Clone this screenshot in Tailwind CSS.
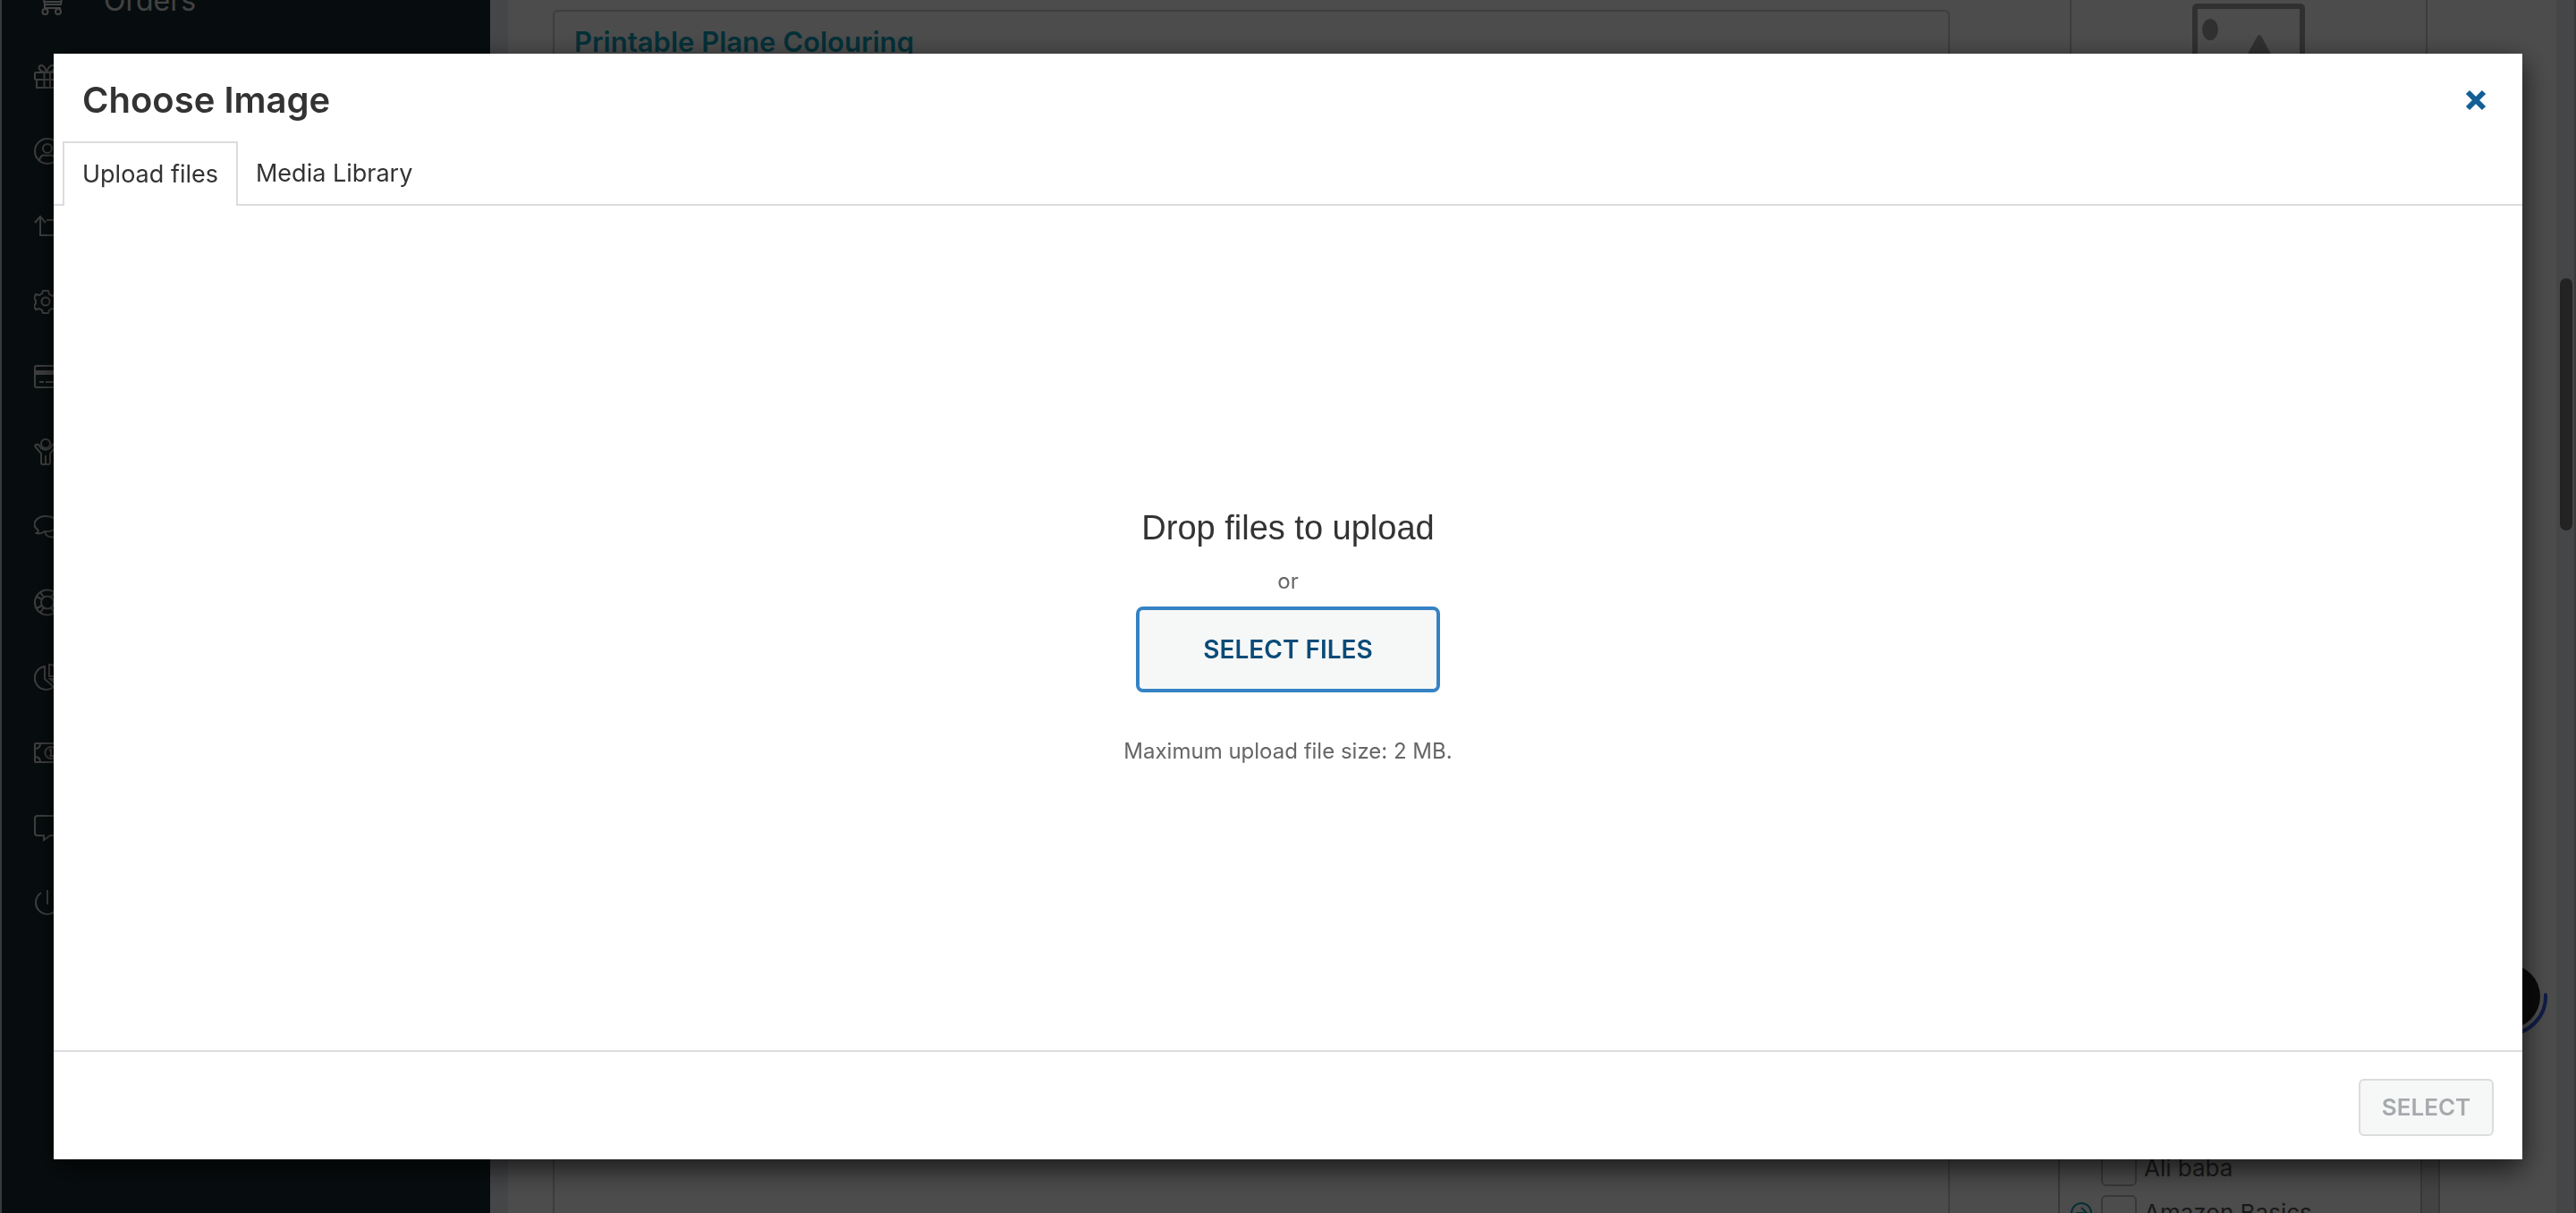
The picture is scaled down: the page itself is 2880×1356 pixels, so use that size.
<!DOCTYPE html>
<html lang="en">
<head>
<meta charset="utf-8">
<title>Choose Image</title>
<script src="https://cdn.jsdelivr.net/npm/@tailwindcss/browser@4"></script>
</head>
<body class="h-screen overflow-hidden bg-white font-['Inter',sans-serif] text-[#2c3338]">

<!-- Store manager page behind the dialog -->
<div class="flex h-screen overflow-hidden" aria-hidden="true">
  <nav class="w-[548px] shrink-0 border-l-2 border-[#c4c4c4] bg-[#1a2c32] pl-9 text-[#dcdcdc]">
    <ul class="-mt-[41px] [&>li]:flex [&>li]:h-[84px] [&>li]:items-center [&_svg]:h-10 [&_svg]:w-10 [&_svg]:fill-none [&_svg]:stroke-current [&_svg]:stroke-2">
      <li class="gap-[38px]"><svg viewBox="0 0 40 40"><path d="M4 7h5l3 17h18l2-14H10M12 21h18M12 24v4h18"/><circle cx="12.500" cy="32" r="3"/><circle cx="27" cy="32" r="3"/></svg><span class="text-[32px] leading-10">Orders</span></li>
      <li><svg viewBox="0 0 40 40"><rect x="1" y="16" width="28" height="8" rx="1"/><path d="M3 24v9h24v-9M11.500 16v17M18 16v17M14 16c-8 0-11-7-6-8 4 0 6 8 6 8s2-8 7-8c5 1 2 8-7 8"/></svg></li>
      <li><svg viewBox="0 0 40 40"><circle cx="15" cy="20" r="14"/><circle cx="15" cy="17" r="5"/><path d="M6 31c1-7 4-7 9-6 5-1 8-1 9 6"/></svg></li>
      <li><svg viewBox="0 0 40 40"><path d="M1 16l6-7 6 7M7 9v21h17M14 13h17v20M25 27l6 6 6-6"/></svg></li>
      <li><svg viewBox="0 0 40 40"><circle cx="13" cy="20" r="4.500"/><path d="M10 8h6l1 4 4 2 4-2 2 5-3 3 0 2 3 3-3 4-4-1-3 2-1 3h-6l-1-3-3-2-4 1-2-4 2-3v-3l-2-3 2-4 4 1 3-2z"/></svg></li>
      <li><svg viewBox="0 0 40 40"><rect x="1" y="8" width="36" height="24" rx="2"/><path d="M1 15.500h36" stroke-width="5"/><path d="M6 26h5M13 26h12"/></svg></li>
      <li><svg viewBox="0 0 40 40"><circle cx="13" cy="11" r="5"/><path d="M8 16l-3-4c-2-1-5 1-3 3l6 7v10c0 3 5 3 5 0v-8 8c0 3 5 3 5 0V22l6-7c2-2-1-4-3-3l-3 4c-3 2-7 2-10 0z"/></svg></li>
      <li><svg viewBox="0 0 40 40"><path d="M3 27c2-1 2-3 1-4C-4 17 3 8 13 8c8 0 13 4 13 9s-6 9-14 8c-3 2-6 3-9 2zM12 26c2 6 9 6 14 5 3 2 6 1 8 1-2-2-1-4 0-5 4-5 0-10-7-12"/></svg></li>
      <li><svg viewBox="0 0 40 40"><circle cx="15" cy="20.500" r="14"/><circle cx="15" cy="20.500" r="7"/><path d="M3 14l6 3M7 9l4 6M27 14l-6 3M23 9l-4 6M3 27l6-3M7 32l4-6M27 27l-6-3M23 32l-4-6"/></svg></li>
      <li><svg viewBox="0 0 40 40"><path d="M12 8a13 13 0 1 0 10 23l-10-9zM17 6v13h13c0-7-5-13-13-13zM18 22l8 7 4-7z"/></svg></li>
      <li><svg viewBox="0 0 40 40"><rect x="1" y="10" width="36" height="21" rx="1"/><circle cx="19" cy="20.500" r="6.500"/><path d="M17 18l2-1v7M17 24h5M1 16c4 0 6-2 6-6M1 25c4 0 6 2 6 6M37 16c-4 0-6-2-6-6M37 25c-4 0-6 2-6 6"/></svg></li>
      <li><svg viewBox="0 0 40 40"><path d="M4 7h29q3 0 3 3v16q0 3-3 3H18l-7 5v-5H4q-3 0-3-3V10q0-3 3-3z"/></svg></li>
      <li><svg viewBox="0 0 40 40"><path d="M15 6v16M8 9a13 13 0 1 0 14 0"/></svg></li>
    </ul>
  </nav>
  <main class="flex min-w-0 flex-1 border-x-20 border-[#e6e9ef] bg-white pr-[130px] pl-[50px]">
    <section class="mt-[11px] -mb-2 flex-1 rounded-md border-2 border-[#c8ccce] px-[22px] pt-[14px]">
      <h2 class="text-[31px] leading-10 font-semibold text-[#0fa0ba]">Printable Plane Colouring</h2>
    </section>
    <aside class="ml-[121px] flex w-[427px] flex-col justify-between">
      <div class="ml-[13px] flex h-[240px] w-[400px] justify-center border-x-2 border-[#c8ccce] pt-1">
        <svg class="h-[120px] w-[126px]" viewBox="0 0 126 120"><rect x="3" y="3" width="120" height="114" rx="2" fill="none" stroke="#a2a2a2" stroke-width="6"/><ellipse cx="20" cy="29" rx="9" ry="12" fill="#a2a2a2"/><path d="M12 105l24-36 12 12 24-43q3-6 6 0l36 67z" fill="#a2a2a2"/></svg>
      </div>
      <div class="-mb-[35px] flex">
        <div class="flex-1 border-x-2 border-[#b9bdbf] pr-4 pl-3">
          <div class="flex h-[50px] items-center"><span class="w-[34px]"></span><input id="ali" type="checkbox" class="size-10 appearance-none rounded-md border-2 border-[#bbb]"><label for="ali" class="ml-2 text-[26px] leading-8 text-[#555]">Ali baba</label></div>
          <div class="flex h-[50px] items-center"><svg class="mr-[10px] h-6 w-6" viewBox="0 0 24 24" fill="none" stroke="#149db0" stroke-width="2"><circle cx="12" cy="12" r="11"/><path d="M6 12h11M12 6l6 6-6 6"/></svg><input id="amazon" type="checkbox" class="size-10 appearance-none rounded-md border-2 border-[#bbb]"><label for="amazon" class="ml-2 text-[26px] leading-8 text-[#555]">Amazon Basics</label></div>
          <div class="h-[10px]"></div>
        </div>
        <div class="w-[20px] border-r-2 border-[#b9bdbf] bg-[#e2e2e2]"></div>
      </div>
    </aside>
  </main>
  <div class="w-[2px] bg-[#c4c4c4]"></div>
</div>

<!-- Chat bubble and page scrollbar -->
<svg class="fixed right-[30px] bottom-[196px] h-[92px] w-[92px]" viewBox="0 0 92 92" aria-hidden="true"><circle cx="46" cy="46" r="36" fill="#222"/><path d="M88 44a42 42 0 0 1-42 44" fill="none" stroke="#3460e8" stroke-width="4" stroke-linecap="round"/></svg>
<div class="fixed top-[311px] right-1 h-[282px] w-[14px] rounded-full bg-[#777]" aria-hidden="true"></div>

<div class="fixed inset-0 bg-black/70"></div>

<div role="dialog" aria-labelledby="dialog-title" class="fixed inset-[60px] flex flex-col bg-white shadow-[0_10px_30px_rgba(0,0,0,0.7)]">
  <header class="flex h-[98px] items-center justify-between pt-[6px] pr-10 pl-8">
    <h1 id="dialog-title" class="text-[40px] leading-[56px] font-semibold text-[#333]">Choose Image</h1>
    <button type="button" aria-label="Close dialog" class="text-[#135e96]"><svg class="h-6 w-6" viewBox="0 0 24 24" fill="none" stroke="currentColor" stroke-width="6" stroke-linejoin="round"><path d="M3 3l18 18M21 3L3 21"/></svg></button>
  </header>
  <div role="tablist" class="flex h-[72px] text-[27px] leading-9 text-[#333]">
    <span class="w-[10px] border-b-2 border-[#dcdcde]"></span>
    <button type="button" role="tab" aria-selected="true" class="border-2 border-b-0 border-[#dcdcde] px-5">Upload files</button>
    <button type="button" role="tab" aria-selected="false" class="border-b-2 border-[#dcdcde] pt-[2px] pl-5">Media Library</button>
    <span class="flex-1 border-b-2 border-[#dcdcde]"></span>
  </div>
  <div class="flex flex-1 flex-col items-center justify-center pt-4">
    <h2 class="font-['Liberation_Sans',sans-serif] text-[38px] leading-[56px] text-[#333]">Drop files to upload</h2>
    <p class="mt-[14px] text-2xl leading-9 text-[#666]">or</p>
    <button type="button" class="mt-[10px] h-24 w-[340px] rounded-lg border-4 border-[#3582c4] bg-[#f6f7f7] text-[28px] leading-9 font-semibold text-[#0a4b78]">SELECT FILES</button>
    <p class="mt-12 text-2xl leading-9 text-[#666]">Maximum upload file size: 2 MB.</p>
  </div>
  <footer class="flex h-[122px] items-center justify-end border-t-2 border-[#dcdcde] pt-1 pr-8">
    <button type="button" disabled class="h-16 w-[151px] rounded-md border-2 border-[#dcdcde] bg-[#f6f7f7] text-[26px] leading-8 font-semibold text-[#a7aaad]">SELECT</button>
  </footer>
</div>
</body>
</html>
